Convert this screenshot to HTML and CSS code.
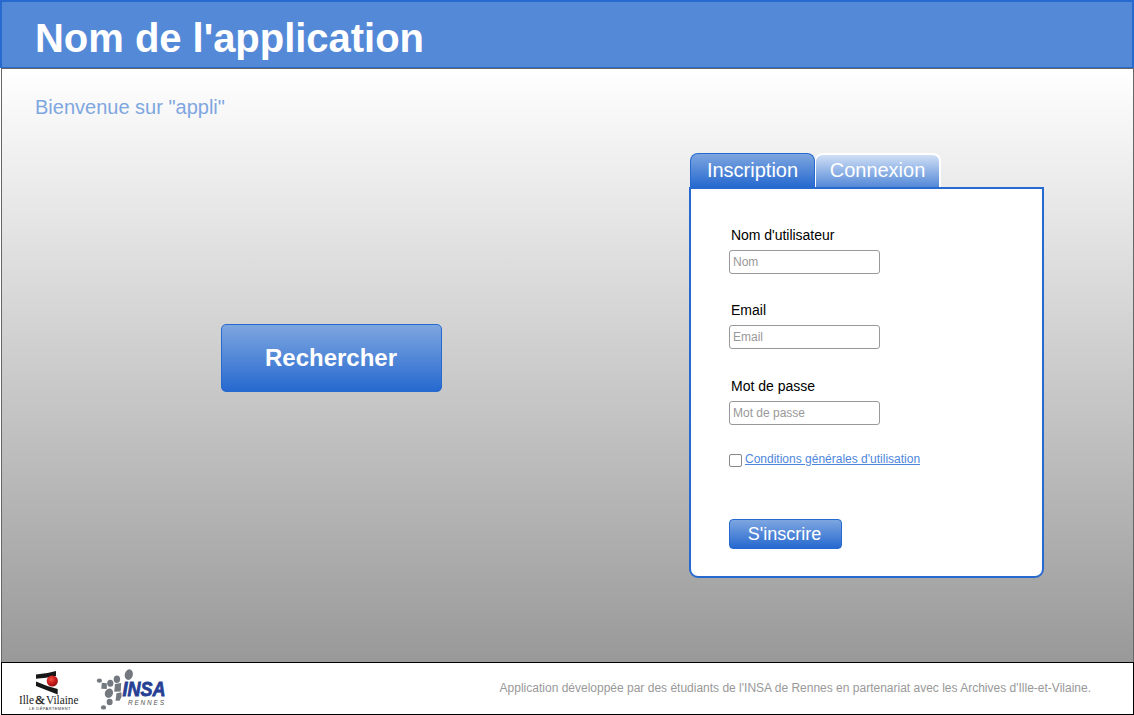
FILE: index.html
```html
<!DOCTYPE html>
<html lang="fr">
<head>
<meta charset="utf-8">
<title>Nom de l'application</title>
<link rel="stylesheet" href="styles.css">
</head>
<body>
<div class="page">
  <header class="header"><h1 class="title">Nom de l'application</h1></header>
  <main class="main">
    <section class="intro">
      <p class="welcome">Bienvenue sur "appli"</p>
      <button class="btn search" type="button">Rechercher</button>
    </section>
    <section class="account">
      <nav class="tabs">
        <a class="tab active">Inscription</a>
        <a class="tab idle">Connexion</a>
      </nav>
      <form class="panel">
        <div class="field">
          <label class="label wide" for="name">Nom d'utilisateur</label>
          <input class="input" id="name" type="text" placeholder="Nom">
        </div>
        <div class="field second">
          <label class="label" for="email">Email</label>
          <input class="input" id="email" type="text" placeholder="Email">
        </div>
        <div class="field">
          <label class="label" for="password">Mot de passe</label>
          <input class="input" id="password" type="text" placeholder="Mot de passe">
        </div>
        <div class="terms">
          <input class="check" type="checkbox" aria-label="Conditions">
          <a class="link">Conditions générales d'utilisation</a>
        </div>
        <button class="btn submit" type="button">S'inscrire</button>
      </form>
    </section>
  </main>
  <footer class="footer">
    <div class="logos">
      <svg class="logo-ille" width="64" height="44" viewBox="0 0 64 44">
        <defs>
          <radialGradient id="ball" cx=".4" cy=".35" r=".7">
            <stop offset="0" stop-color="#f0553f"/><stop offset=".55" stop-color="#c9191c"/><stop offset="1" stop-color="#8d1014"/>
          </radialGradient>
        </defs>
        <path d="M18 5.500Q28 5 38 2V7Q28 9 18 9.700Z" fill="#171717"/>
        <path d="M18 12.500Q29 17.500 39.700 20V25.500Q28 21 18 17Z" fill="#171717"/>
        <circle cx="34.300" cy="12" r="5.600" fill="url(#ball)"/>
        <text class="ille-name" x="1" y="34.500" textLength="15" lengthAdjust="spacingAndGlyphs">Ille</text>
        <text class="ille-name amp" x="17.300" y="34.500" textLength="9.500" lengthAdjust="spacingAndGlyphs">&amp;</text>
        <text class="ille-name" x="28" y="34.500" textLength="32.500" lengthAdjust="spacingAndGlyphs">Vilaine</text>
        <text class="ille-sub" x="11" y="40.700" textLength="41.500">LE DÉPARTEMENT</text>
      </svg>
      <svg class="logo-insa" width="74" height="44" viewBox="0 0 74 44">
        <g fill="#74797f">
          <ellipse cx="31.800" cy="5.600" rx="4" ry="5.400" transform="rotate(15 31.800 5.600)"/>
          <ellipse cx="2.400" cy="11.700" rx="2.600" ry="2.100"/>
          <path d="M4.800 13.700l5 .5v5.800l-5.500-.3z"/>
          <ellipse cx="13.300" cy="14.200" rx="3.100" ry="3.500"/>
          <ellipse cx="19.900" cy="10.200" rx="3.200" ry="3.800"/>
          <path d="M18 15l6.200-1-.5 8.500-6.500.3z"/>
          <ellipse cx="11.900" cy="24.200" rx="4" ry="4.800" transform="rotate(25 11.900 24.200)"/>
          <path d="M19.500 24.300l5-1v4.700l-2 3.800h-4z"/>
          <ellipse cx="12.600" cy="33" rx="3" ry="3.300"/>
          <ellipse cx="6.500" cy="38.400" rx="2.600" ry="2.200"/>
        </g>
        <text class="insa-name" x="25.500" y="27.300" textLength="43" lengthAdjust="spacingAndGlyphs">INSA</text>
        <text class="insa-sub" x="31" y="36.200" textLength="36">RENNES</text>
      </svg>
    </div>
    <p class="credits">Application développée par des étudiants de l'INSA de Rennes en partenariat avec les Archives d'Ille-et-Vilaine.</p>
  </footer>
</div>
</body>
</html>
```
FILE: styles.css
```css
* { box-sizing: border-box; }
body { margin: 0; background: #fff; font-family: "Liberation Sans", Arial, sans-serif; overflow: hidden; }
.page { width: 1134px; height: 715px; display: flex; flex-direction: column; }
.header { height: 68px; padding: 12px 0 0 33px; background: #5489d8; border: 2px solid #2669cf; border-bottom-width: 1px; }
.title { margin: 0; color: #fff; font-size: 40px; line-height: 48px; letter-spacing: -.03px; white-space: nowrap; }
.main { height: 594px; margin-left: 1px; display: flex; border: 1px solid #666; border-bottom: 0; background: linear-gradient(#fff, #999); }
.intro { width: 687px; padding: 26px 0 0 33px; }
.welcome { margin: 0; font-size: 20px; line-height: 24px; color: #7ea6e0; }
.btn { display: block; border: 1px solid #2669cf; color: #fff; font-family: inherit; background: linear-gradient(#7ea6e0, #2669cf); padding: 0; }
.search { width: 221px; height: 68px; margin: 205px 0 0 186px; padding-right: 1px; border-radius: 5px; font-size: 24px; font-weight: bold; }
.account { width: 355px; padding-top: 84px; }
.tabs { display: flex; height: 34px; padding-left: 1px; }
.tab { width: 125px; height: 34px; border-radius: 8px 8px 0 0; color: #fff; font-size: 20px; line-height: 33px; text-align: center; }
.active { border: 1px solid #2669cf; border-bottom: 0; background: linear-gradient(#7ea6e0, #2669cf); }
.idle { width: 126px; border: 2px solid #fff; border-left-width: 1px; border-bottom: 0; background: linear-gradient(#d0dff5, #5489d8); line-height: 31px; }
.panel { width: 355px; height: 391px; border: 2px solid #2669cf; border-radius: 0 0 9px 9px; background: #fff; padding: 38px; }
.field { height: 75px; }
.second { height: 76px; }
.label { display: block; height: 23px; padding-left: 2px; font-size: 14px; line-height: 17px; color: #000; }
.wide { letter-spacing: -.03px; }
.input { display: block; width: 151px; height: 24px; border: 1px solid #999; border-radius: 3px; padding: 0 3px; font: 12px "Liberation Sans", Arial, sans-serif; background: #fff; }
.input::placeholder { color: #999; opacity: 1; }
.terms { display: flex; height: 66px; gap: 3px; align-items: flex-start; }
.check { appearance: none; width: 13px; height: 13px; margin: 1px 0 0; border: 1px solid #888; border-radius: 2px; background: #fff; }
.link { color: #4d86dc; font-size: 12px; line-height: 14px; text-decoration: underline; margin-top: -1px; }
.submit { width: 113px; height: 30px; border-radius: 4px; font-size: 18px; padding-right: 2px; }
.footer { height: 53px; margin-left: 1px; border: 1px solid #000; background: #fff; display: flex; justify-content: space-between; padding: 6px 42px 0 16px; }
.logos { display: flex; gap: 15px; }
.logo-insa { overflow: visible; }
.credits { margin: 11px 0 0; font-size: 12px; line-height: 16px; color: #999; }
.ille-name { font: 11.5px "Liberation Serif", serif; fill: #222; }
.amp { font-size: 13px; stroke: #222; stroke-width: .3px; }
.ille-sub { font: 4px "Liberation Sans", sans-serif; fill: #333; }
.insa-name { font: italic bold 20px "Liberation Sans", sans-serif; fill: #263f94; stroke: #263f94; stroke-width: .8px; }
.insa-sub { font: italic 6.5px "Liberation Sans", sans-serif; fill: #555; }
```
